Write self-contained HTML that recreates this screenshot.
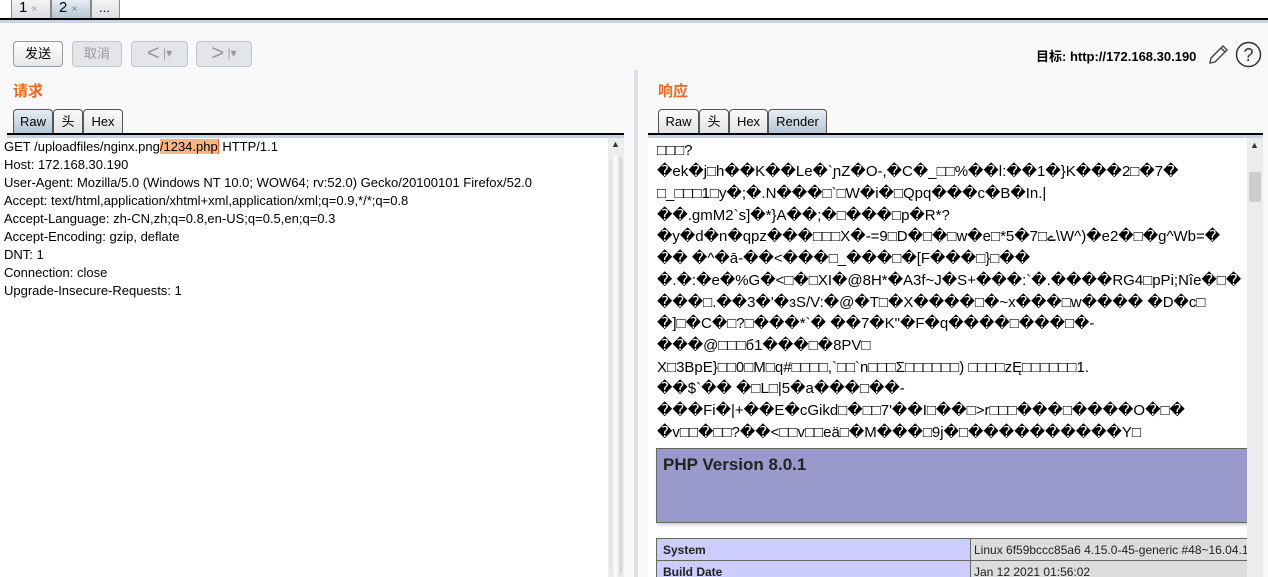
<!DOCTYPE html>
<html><head><meta charset="utf-8"><style>
body{margin:0;width:1268px;height:577px;background:#f9f9f9;font-family:"Liberation Sans","Noto Sans CJK SC",sans-serif;position:relative;overflow:hidden;font-size:13px;color:#000}
.a{position:absolute}
.tab{position:absolute;top:0;height:19px;border:1px solid #888;border-top:none;background:linear-gradient(#f4f4f4,#dcdde2);font-size:15px;line-height:16px;padding-left:7px;box-sizing:border-box}
.btn{position:absolute;top:41px;height:26px;border:1px solid #999;border-radius:4px;box-sizing:border-box;background:linear-gradient(#fff,#e6e7ea);text-align:center;line-height:24px;font-size:13px}
.dis{border-color:#c4c6cc;background:#e4e5e9;color:#999}
.st{position:absolute;height:24px;border:1px solid #555;border-bottom:none;border-radius:4px 4px 0 0;box-sizing:border-box;background:linear-gradient(#fbfbfb,#e3e4e8);font-size:13px;line-height:24px;text-align:center}
.sel{background:linear-gradient(#e6edf5,#b5c6d6)}
.req div{height:18px;line-height:18px;white-space:pre}
.resp div{height:21.7px;line-height:21.7px;white-space:pre;font-size:15px;font-family:"Liberation Sans","DejaVu Sans",sans-serif}
</style></head><body>
<div class="a" style="left:0;top:0;width:1268px;height:19px;background:#fff"></div>
<div class="tab" style="left:11px;width:40px">1 <span style="color:#999;font-size:10px">×</span></div>
<div class="tab sel" style="left:51px;width:40px">2 <span style="color:#777;font-size:10px">×</span></div>
<div class="tab" style="left:91px;width:29px;font-size:13px">...</div>
<div class="a" style="left:0;top:18px;width:1268px;height:2px;background:#000"></div>
<div class="a" style="left:0;top:20px;width:1268px;height:3px;background:#c6d4e1"></div>
<div class="btn" style="left:13px;width:50px">发送</div>
<div class="btn dis" style="left:72px;width:50px">取消</div>
<div class="btn dis" style="left:131px;width:57px;font-size:22px;line-height:22px">&lt;<span style="font-size:12px;vertical-align:3px"> |▾</span></div>
<div class="btn dis" style="left:196px;width:56px;font-size:22px;line-height:22px">&gt;<span style="font-size:12px;vertical-align:3px"> |▾</span></div>
<div class="a" style="left:1036px;top:46px;font-weight:bold;font-size:13px">目标: http://172.168.30.190</div>
<svg class="a" style="left:1206px;top:42px" width="24" height="24" viewBox="0 0 24 24"><path d="M4 21 L5 16 L17 4 L21 8 L9 20 Z M15 6 L19 10" fill="none" stroke="#444" stroke-width="1.4"/></svg>
<svg class="a" style="left:1235px;top:41px" width="27" height="27" viewBox="0 0 27 27"><circle cx="13.5" cy="13.5" r="12" fill="none" stroke="#333" stroke-width="1.5"/><text x="13.5" y="20" text-anchor="middle" font-size="18" font-family="Liberation Sans" fill="#333">?</text></svg>
<div class="a" style="left:13px;top:80px;color:#f26522;font-weight:bold;font-size:15px">请求</div>
<div class="a" style="left:658px;top:80px;color:#f26522;font-weight:bold;font-size:15px">响应</div>
<div class="st sel" style="left:13px;top:109px;width:40px">Raw</div>
<div class="st" style="left:53px;top:109px;width:30px">头</div>
<div class="st" style="left:83px;top:109px;width:40px">Hex</div>
<div class="st" style="left:658px;top:109px;width:41px">Raw</div>
<div class="st" style="left:699px;top:109px;width:30px">头</div>
<div class="st" style="left:729px;top:109px;width:39px">Hex</div>
<div class="st sel" style="left:768px;top:109px;width:59px">Render</div>
<div class="a" style="left:7px;top:133px;width:617px;height:2px;background:#000"></div>
<div class="a" style="left:7px;top:135px;width:617px;height:3px;background:#c6d4e1"></div>
<div class="a" style="left:648px;top:133px;width:615px;height:2px;background:#000"></div>
<div class="a" style="left:648px;top:135px;width:615px;height:3px;background:#c6d4e1"></div>
<div class="a" style="left:0;top:138px;width:608px;height:439px;background:#fff"></div>
<div class="a" style="left:608px;top:138px;width:16px;height:439px;background:#ececec"></div>
<div class="a" style="left:610px;top:155px;width:12px;height:422px;background:linear-gradient(90deg,#ddd,#fff,#ccc);border-radius:6px"></div>
<div class="a" style="left:611px;top:139px;font-size:9px;color:#333">▲</div>
<div class="a" style="left:634px;top:70px;width:4px;height:507px;background:#dde0e5"></div>
<div class="req a" style="left:4px;top:138px;font-size:13px">
<div>GET /uploadfiles/nginx.png<span style="background:#fbb581">/1234.php</span><span style="border-left:1px solid #f26522"></span> HTTP/1.1</div>
<div>Host: 172.168.30.190</div>
<div>User-Agent: Mozilla/5.0 (Windows NT 10.0; WOW64; rv:52.0) Gecko/20100101 Firefox/52.0</div>
<div>Accept: text/html,application/xhtml+xml,application/xml;q=0.9,*/*;q=0.8</div>
<div>Accept-Language: zh-CN,zh;q=0.8,en-US;q=0.5,en;q=0.3</div>
<div>Accept-Encoding: gzip, deflate</div>
<div>DNT: 1</div>
<div>Connection: close</div>
<div>Upgrade-Insecure-Requests: 1</div>
</div>
<div class="a" style="left:648px;top:138px;width:599px;height:439px;background:#fff;overflow:hidden">
<div class="resp a" style="left:9px;top:-20px">
<div>�Q□�□X �□□□□�□r□□□�□|Q�□�����□�□��□nnnK��□�□���@��Yd</div>
<div>□□□?</div>
<div>�ek�j□h��K��Le�`ɲZ�O-,�C�_□□%��l:��1�}K���2□�7�</div>
<div>□_□□□1□y�;�.N���□`□W�i�□Qpq���c�B�In.|</div>
<div>��.gmM2`s]�*}A��;�□���□p�R*?</div>
<div>�y�d�n�qpz���□□□X�-=9□D�□�□w�e□*5�7□ے\W^)�e2�□�g^Wb=�</div>
<div>�� �^�ā-��<���□_���□�[F���□}□��</div>
<div>�.�:�e�%G�<□�□XI�@8H*�A3f~J�S+���:`�.����RG4□pPi;Nîe�□�</div>
<div>���□.��3�'�ɜS/V:�@�T□�X����□�~x���□w���� �D�c□</div>
<div>�]□�C�□?□���*`� ��7�K"�F�q����□���□�-</div>
<div>���@□□□б1���□�8PV□</div>
<div>X□3BpE}□□0□M□q#□□□□,`□□`n□□□Σ□□□□□□) □□□□zĘ□□□□□□1.</div>
<div>��$`�� �□L□|5�a���□��-</div>
<div>���Fi�|+��E�cGikd□�□□7'��I□��□>r□□□���□����O�□�</div>
<div>�v□□�□□?��<□□v□□eä□�M���□9j�□����������Y□</div>
</div>
<div class="a" style="left:8px;top:310px;width:591px;height:73px;background:#9999cc;border:1px solid #666;box-shadow:1px 2px 3px #ccc"><div style="font-weight:bold;font-size:17px;padding:6px 0 0 6px;color:#222">PHP Version 8.0.1</div></div>
<div class="a" style="left:8px;top:400px;width:315px;height:23px;background:#ccccff;border:1px solid #666;box-sizing:border-box;font-weight:bold;font-size:12px;line-height:22px;padding-left:6px;color:#222">System</div>
<div class="a" style="left:322px;top:400px;width:300px;height:23px;background:#dddddd;border:1px solid #666;box-sizing:border-box;font-size:12px;line-height:22px;padding-left:3px;white-space:nowrap;color:#222">Linux 6f59bccc85a6 4.15.0-45-generic #48~16.04.1</div>
<div class="a" style="left:8px;top:422px;width:315px;height:23px;background:#ccccff;border:1px solid #666;box-sizing:border-box;font-weight:bold;font-size:12px;line-height:22px;padding-left:6px;color:#222">Build Date</div>
<div class="a" style="left:322px;top:422px;width:300px;height:23px;background:#dddddd;border:1px solid #666;box-sizing:border-box;font-size:12px;line-height:22px;padding-left:3px;color:#222">Jan 12 2021 01:56:02</div>
</div>
<div class="a" style="left:1247px;top:138px;width:16px;height:439px;background:#ececec"></div>
<div class="a" style="left:1249px;top:172px;width:12px;height:30px;background:#cdcdcd;border-radius:2px"></div>
<div class="a" style="left:1250px;top:140px;font-size:9px;color:#333">▲</div>
</body></html>
